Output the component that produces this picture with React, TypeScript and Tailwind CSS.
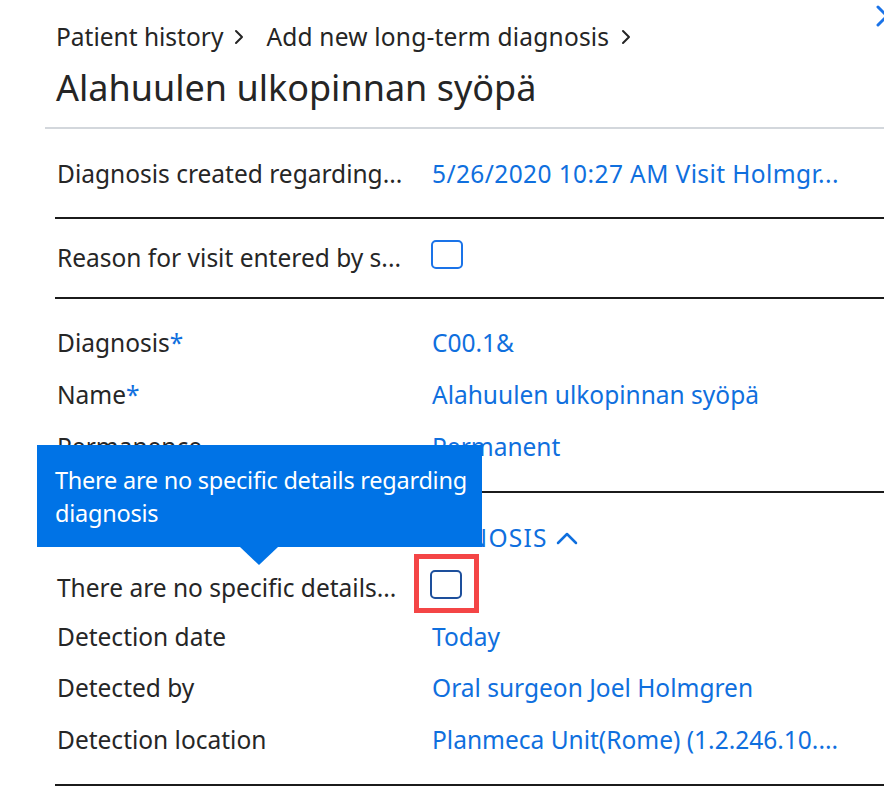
import React from "react";

const Chevron = () => (
  <svg width="10" height="16" viewBox="0 0 10 16" className="shrink-0">
    <path d="M2 2 L8 8 L2 14" fill="none" stroke="#252525" strokeWidth="2" strokeLinecap="round" strokeLinejoin="round" />
  </svg>
);

const Row = ({ label, value, h = "h-[52px]", star = false }: { label: string; value: React.ReactNode; h?: string; star?: boolean }) => (
  <div className={`flex items-center ${h}`}>
    <div className="w-[377px] shrink-0 whitespace-nowrap text-[#262626] pl-[2px]">
      {label}
      {star && <span className="text-[#0f6fde]">*</span>}
    </div>
    <div className="whitespace-nowrap text-[#0f6fde]">{value}</div>
  </div>
);

export default function App() {
  return (
    <div className="relative w-[884px] h-[806px] overflow-hidden bg-white font-['Noto_Sans',sans-serif] text-[24.5px] leading-[32px]">
      {/* close X, partially cut off */}
      <svg className="absolute left-[876px] top-[5px]" width="22" height="22" viewBox="0 0 22 22">
        <path d="M2 2 L20 20 M20 2 L2 20" fill="none" stroke="#1a73e8" strokeWidth="3" strokeLinecap="round" />
      </svg>

      <div className="pl-[56px] pt-[21px]">
        <div className="flex items-center text-[#252525]">
          <span>Patient history</span>
          <span className="ml-[11px] mr-[22px] flex items-center"><Chevron /></span>
          <span className="tracking-[0.2px]">Add new long-term diagnosis</span>
          <span className="ml-[12px] flex items-center"><Chevron /></span>
        </div>
        <div className="mt-[11px] text-[36px] leading-[48px] text-[#252525]">Alahuulen ulkopinnan syöpä</div>
      </div>

      <div className="ml-[45px] mt-[15px] h-[2px] bg-[#d3d7dc]" />

      <div className="ml-[55px]">
        <div className="pt-[19px] pb-[17px] border-b-2 border-[#1b1b1b]">
          <Row label="Diagnosis created regarding..." value={<span className="tracking-[0.4px]">5/26/2020 10:27 AM Visit Holmgr...</span>} />
        </div>

        <div className="pt-[13px] pb-[13px] border-b-2 border-[#1b1b1b]">
          <Row
            label="Reason for visit entered by s..."
            value={<div className="w-[32px] h-[29px] rounded-[5px] border-2 border-[#1a73e8] -mt-[8px] -ml-[1px]" />}
          />
        </div>

        <div className="pt-[18px] pb-[18px] border-b-2 border-[#1b1b1b]">
          <Row label="Diagnosis" star value="C00.1&" />
          <Row label="Name" star value="Alahuulen ulkopinnan syöpä" />
          <Row label="Permanence" value="Permanent" />
        </div>

        <div className="pt-[19px] pb-[18px] border-b-2 border-[#1b1b1b]">
          <div className="flex items-center h-[52px] pl-[2px] text-[#0f6fde] whitespace-nowrap">
            <span className="tracking-[1.2px]">DETAILS OF REACHING THE DIAGNOSIS</span>
            <svg className="ml-[8px]" width="22" height="14" viewBox="0 0 22 14">
              <path d="M2 12 L11 3 L20 12" fill="none" stroke="#0f6fde" strokeWidth="2.5" strokeLinecap="round" strokeLinejoin="round" />
            </svg>
          </div>
          <Row
            h="h-[48px]"
            label="There are no specific details..."
            value={
              <div className="relative -mt-[7px] -ml-[2px]">
                <div className="w-[32px] h-[29px] rounded-[5px] border-2 border-[#1d4f9c]" />
                <div className="absolute left-[-16px] top-[-16px] w-[65px] h-[59px] border-[5px] border-[#f44546]" />
              </div>
            }
          />
          <Row h="h-[50px]" label="Detection date" value="Today" />
          <Row label="Detected by" value="Oral surgeon Joel Holmgren" />
          <Row label="Detection location" value="Planmeca Unit(Rome) (1.2.246.10...." />
        </div>
      </div>

      {/* tooltip */}
      <div className="absolute left-[37px] top-[445px] w-[445px] h-[102px] bg-[#0073e6] text-white pl-[18px] pt-[19px] text-[23.5px] tracking-[-0.25px] leading-[33px] whitespace-nowrap">
        <div>There are no specific details regarding</div>
        <div>diagnosis</div>
        <div className="absolute left-[203px] top-full w-0 h-0 border-l-[19px] border-r-[19px] border-t-[18px] border-l-transparent border-r-transparent border-t-[#0073e6]" />
      </div>
    </div>
  );
}
